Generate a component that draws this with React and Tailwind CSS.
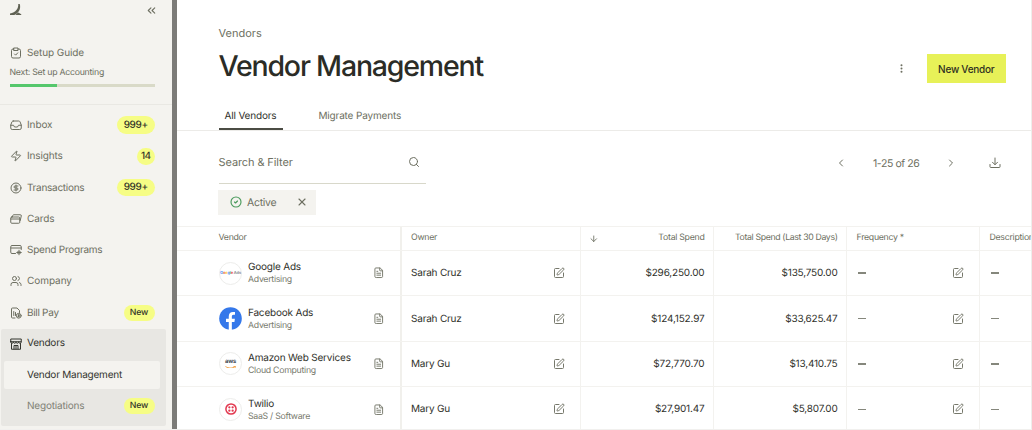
import React from "react";
import {
  ArrowDown, ChevronLeft, ChevronRight, ChevronsLeft, CircleCheck, CircleDollarSign,
  EllipsisVertical, FileText, Search, SquarePen, Users, X, Zap,
} from "lucide-react";

function Svg({ children, className = "size-3" }) {
  return (
    <svg viewBox="0 0 24 24" fill="none" stroke="currentColor" strokeWidth="2" strokeLinecap="round" strokeLinejoin="round" className={"shrink-0 " + className}>
      {children}
    </svg>
  );
}

const Clipboard = () => (
  <Svg>
    <path d="M8 4H6a3 3 0 0 0-3 3v12a3 3 0 0 0 3 3h12a3 3 0 0 0 3-3V7a3 3 0 0 0-3-3h-2" />
    <path d="M8 2h8v5H8z" />
    <path d="m9 14 2.300 2.300 4.200-4.600" />
  </Svg>
);

const InboxIcon = () => (
  <Svg>
    <path d="M1.500 12.500h5.500l2 3.500h6l2-3.500h5.500" />
    <path d="M6.500 4h11a3 3 0 0 1 2.600 1.600l2.400 6.400v6a3 3 0 0 1-3 3h-15a3 3 0 0 1-3-3v-6l2.400-6.400A3 3 0 0 1 6.500 4z" />
  </Svg>
);

const CardsIcon = () => (
  <Svg>
    <path d="M4.500 8 5.500 5a2 2 0 0 1 2-1.500h13A2 2 0 0 1 22.500 6l-2 9" />
    <rect x="1.500" y="8" width="18" height="12.500" rx="2" />
    <path d="M2 12h17" />
  </Svg>
);

const ProgramsIcon = () => (
  <Svg>
    <path d="M11 19H4a2.500 2.500 0 0 1-2.500-2.500v-11A2.500 2.500 0 0 1 4 3h16a2.500 2.500 0 0 1 2.500 2.500V11" />
    <path d="M2 8h20" />
    <path d="M18 12.500v9M13.500 17h9M15.500 14.500l5 5M20.500 14.500l-5 5" />
  </Svg>
);

const BillIcon = () => (
  <Svg>
    <path d="M10 22H5a2 2 0 0 1-2-2V4a2 2 0 0 1 2-2h9l5 5v4" />
    <path d="M7.500 9v8M11 11v6" />
    <circle cx="17.500" cy="17.500" r="4.800" />
    <path d="M19 16h-2.500v1.500h2V19H16M17.500 15v5" />
  </Svg>
);

const StoreIcon = () => (
  <Svg>
    <path d="M1.500 7.500V2h21v5.500c0 4-5.200 4-5.200 0 0 4-5.300 4-5.300 0 0 4-5.300 4-5.300 0 0 4-5.200 4-5.200 0zM1.500 7.500h21" />
    <path d="M3 11v11.500h18V11M8 22v-7h8v7M12 15v7" />
  </Svg>
);

const DownloadIcon = () => (
  <Svg>
    <path d="M12 2v13M7 10.500l5 5 5-5M2 15v4.500A1.500 1.500 0 0 0 3.500 21h17a1.500 1.500 0 0 0 1.500-1.500V15" />
  </Svg>
);

const nav = [
  { icon: InboxIcon, label: "Inbox", badge: "999+" },
  { icon: Zap, label: "Insights", badge: "14", track: "tracking-[-0.15px]" },
  { icon: CircleDollarSign, label: "Transactions", badge: "999+", track: "tracking-[-0.28px]" },
  { icon: CardsIcon, label: "Cards" },
  { icon: ProgramsIcon, label: "Spend Programs", track: "tracking-[-0.24px]" },
  { icon: Users, label: "Company", track: "tracking-[-0.05px]" },
  { icon: BillIcon, label: "Bill Pay", badge: "New", track: "tracking-[-0.3px]" },
];

function Badge({ text }) {
  if (!text) return null;
  const kind =
    text === "New"
      ? "h-4 w-[31px] pt-px text-[8.75px] tracking-[-0.2px]"
      : text === "14"
        ? "size-[17.5px] text-[10px] tracking-[-0.5px]"
        : "h-[17.5px] w-[37.5px] text-[10px] tracking-[-0.35px]";
  return (
    <span className={"ml-auto flex items-center justify-center rounded-full bg-[#f6fd85] font-medium text-[#33342a] " + kind}>{text}</span>
  );
}

function NavRow({ item }) {
  const Icon = item.icon;
  return (
    <div className="flex h-[31.25px] items-center pl-[9.5px] pr-[17.5px]">
      <span className="flex w-[17.5px]"><Icon className="size-3" /></span>
      <span className={"pt-px text-[10px] " + (item.track || "tracking-[-0.1px]")}>{item.label}</span>
      <Badge text={item.badge} />
    </div>
  );
}

function Sidebar() {
  return (
    <aside className="flex w-[172px] shrink-0 flex-col bg-[#f4f3ef] text-[#6d6f61]">
      <div className="flex h-[41px] items-start justify-between pl-[10px] pr-[14px] pt-[4px]">
        <svg viewBox="0 0 24 24" className="size-[12px]" fill="#5f6153">
          <path d="M16.500 0c.8 9-4.800 16.500-16.500 19.200v3h8.500C17 18 22.500 10 19.500 0z" />
          <path d="m13 19.500 3.500-2.500 6 3.300v1.900H11z" />
        </svg>
        <ChevronsLeft className="size-[13px]" strokeWidth={2} />
      </div>
      <div className="flex h-[63.500px] flex-col border-b border-[#e9e8e3] pl-[9.5px] pr-[17.5px]">
        <div className="flex h-[23px] items-center">
          <span className="flex w-[17.5px]"><Clipboard /></span>
          <span className="pt-px text-[10px] tracking-[-0.1px]">Setup Guide</span>
        </div>
        <div className="flex h-[17px] items-center pt-[1.5px] text-[8.75px] tracking-[-0.26px]">Next: Set up Accounting</div>
        <div className="mt-[3px] flex h-[3px] bg-[#d9dac8]">
          <div className="w-[33%] bg-[#55c76c]" />
        </div>
      </div>
      <div className="flex flex-col pt-[5px]">
        {nav.map((item) => <NavRow key={item.label} item={item} />)}
      </div>
      <div className="ml-[1px] mr-[6px] mt-[1px] flex h-[97px] flex-col rounded-[2px] bg-[#e8e7e3]">
        <div className="flex h-7 items-center pl-[8.5px] text-[#33342e]">
          <span className="flex w-[17.5px] pt-px"><StoreIcon /></span>
          <span className="pt-px text-[10px] tracking-[-0.22px]">Vendors</span>
        </div>
        <div className="ml-[3px] mr-[6px] mt-[3.500px] flex h-[28.500px] items-center rounded-[2px] bg-[#f4f3ef] pl-[23px] pt-px text-[10px] tracking-[-0.22px] text-[#33342e]">
          Vendor Management
        </div>
        <div className="flex h-[34px] items-center pl-[26px] pr-[11.5px] text-[10px] tracking-[-0.2px] text-[#7f8175]">
          <span className="pt-px">Negotiations</span>
          <Badge text="New" />
        </div>
      </div>
    </aside>
  );
}

const rows = [
  { name: "Google Ads", kind: "Advertising", logo: "google", owner: "Sarah Cruz", total: "$296,250.00", month: "$135,750.00" },
  { name: "Facebook Ads", kind: "Advertising", logo: "facebook", owner: "Sarah Cruz", total: "$124,152.97", month: "$33,625.47" },
  { name: "Amazon Web Services", kind: "Cloud Computing", logo: "aws", owner: "Mary Gu", total: "$72,770.70", month: "$13,410.75" },
  { name: "Twilio", kind: "SaaS / Software", logo: "twilio", owner: "Mary Gu", total: "$27,901.47", month: "$5,807.00" },
];

function Logo({ kind }) {
  if (kind === "facebook") {
    return (
      <svg viewBox="0 0 24 24" className="size-[23px] shrink-0">
        <circle cx="12" cy="12" r="11.800" fill="#3578ea" />
        <path d="M10.200 24v-8.300H7.300v-3.500h2.900V9.600c0-3 1.700-4.500 4.400-4.500 1.100 0 2.100.2 2.100.2v2.900h-1.400c-1.500 0-1.900.9-1.900 1.900v2.100h3.200l-.5 3.500h-2.700V24z" fill="#fff" />
      </svg>
    );
  }
  return (
    <span className="flex size-[23px] shrink-0 items-center justify-center rounded-full border border-[#ededeb] bg-white">
      {kind === "google" && (
        <span className="flex whitespace-pre text-[4px] font-semibold leading-none tracking-[-0.15px]">
          <span className="text-[#4285f4]">G</span><span className="text-[#ea4335]">o</span><span className="text-[#fbbc05]">o</span>
          <span className="text-[#4285f4]">g</span><span className="text-[#34a853]">l</span><span className="text-[#ea4335]">e</span>
          <span className="text-[#85878b]"> Ads</span>
        </span>
      )}
      {kind === "aws" && (
        <span className="flex flex-col items-center">
          <span className="h-[5px] text-[6px] font-semibold leading-[4px] tracking-[-0.3px] text-[#333d4a]">aws</span>
          <svg viewBox="0 0 22 5" className="mt-px h-[2.500px] w-[11px]" fill="none" stroke="#f0a045" strokeWidth="2">
            <path d="M1 1c6 4 14 4 19 0M17 .8l4-.2-.8 3" />
          </svg>
        </span>
      )}
      {kind === "twilio" && (
        <svg viewBox="0 0 24 24" className="size-[12px]">
          <circle cx="12" cy="12" r="10.200" fill="none" stroke="#e2384f" strokeWidth="3" />
          <g fill="#e2384f">
            <circle cx="8.700" cy="8.700" r="2.300" /><circle cx="15.300" cy="8.700" r="2.300" />
            <circle cx="8.700" cy="15.300" r="2.300" /><circle cx="15.300" cy="15.300" r="2.300" />
          </g>
        </svg>
      )}
    </span>
  );
}

const Dash = () => <span className="h-[1.500px] w-2 bg-[#85877c]" />;
const grid = "grid grid-cols-[225px_179px_133px_133px_133px_52px]";
const line = "border-r border-[#f3f2ef]";
const first = "border-r-2 border-[#f1f0ec]";

function Table() {
  return (
    <div className="flex flex-col">
      <div className={grid + " h-[25px] border-y border-[#f3f2ef] text-[8.75px] tracking-[-0.28px] text-[#6d6f61]"}>
        <div className={"flex items-center pl-[41.500px] pt-px " + first}>Vendor</div>
        <div className={"flex items-center pl-[9px] pt-px " + line}>Owner</div>
        <div className={"flex items-center justify-between pl-2 pr-[8.500px] " + line}>
          <ArrowDown className="size-[9.500px]" strokeWidth={2.2} />
          <span className="pt-px">Total Spend</span>
        </div>
        <div className={"flex items-center justify-end pr-[8.500px] pt-px tracking-[-0.36px] " + line}>Total Spend (Last 30 Days)</div>
        <div className={"flex items-center pl-[9.500px] pt-px " + line}>Frequency *</div>
        <div className="flex items-center overflow-hidden whitespace-nowrap pl-[9.500px] pt-px">Description</div>
      </div>
      {rows.map((r) => (
        <div key={r.name} className={grid + " h-[45.400px] border-b border-[#f3f2ef] text-[10px] tracking-[-0.2px] text-[#30312b]"}>
          <div className={"flex items-center pl-[42px] pr-[15.500px] " + first}>
            <Logo kind={r.logo} />
            <div className="ml-[6px] flex flex-col pt-[1.500px]">
              <span className="text-[10px] leading-[13px]">{r.name}</span>
              <span className="text-[8.75px] leading-[12px] tracking-[-0.28px] text-[#787a6d]">{r.kind}</span>
            </div>
            <FileText className="ml-auto size-[11.500px] text-[#76786b]" />
          </div>
          <div className={"flex items-center justify-between pl-[9px] pr-[15px] " + line}>
            <span className="pt-px">{r.owner}</span>
            <SquarePen className="size-3 text-[#76786b]" />
          </div>
          <div className={"flex items-center justify-end pr-[8.500px] pt-px tracking-[-0.17px] " + line}>{r.total}</div>
          <div className={"flex items-center justify-end pr-[8.500px] pt-px " + line}>{r.month}</div>
          <div className={"flex items-center justify-between pl-[11px] pr-[15px] " + line}>
            <Dash />
            <SquarePen className="size-3 text-[#76786b]" />
          </div>
          <div className="flex items-center pl-[11px]"><Dash /></div>
        </div>
      ))}
    </div>
  );
}

export default function App() {
  return (
    <div className="flex h-[430px] w-[1032px] overflow-hidden border-b border-[#f1f0ee] bg-white font-[Inter,sans-serif] [text-rendering:geometricPrecision]">
      <Sidebar />
      <div className="w-[5px] shrink-0 bg-[#7c7b78]" />
      <main className="flex min-w-0 flex-1 flex-col overflow-hidden border-r border-[#eeeeeb] text-[#6d6f61]">
        <header className="flex h-[131px] shrink-0 flex-col border-b border-[#ecebe8] pl-[41.500px] pr-[25px]">
          <div className="mt-6 flex h-[17px] items-center pt-px text-[11px]">Vendors</div>
          <div className="mt-[4px] flex h-[42px] items-center">
            <h1 className="text-[28.500px] font-[450] leading-none tracking-[-1.2px] text-[#2b2c26]">Vendor Management</h1>
            <EllipsisVertical className="ml-auto mt-[5px] size-[11px]" strokeWidth={2.4} />
            <button className="ml-5 mt-[5px] flex h-[28.500px] w-[79.500px] items-center justify-center bg-[#e7f158] pt-px text-[10px] font-medium tracking-[-0.25px] text-[#2f3022]">New Vendor</button>
          </div>
          <nav className="mt-auto flex h-[29px] text-[10px] tracking-[-0.17px]">
            <span className="flex w-16 justify-center border-b-2 border-[#4b4c44] pt-[8px] text-[#30312b]">All Vendors</span>
            <span className="ml-9 pt-[8px]">Migrate Payments</span>
          </nav>
        </header>
        <div className="flex h-[53px] shrink-0 items-start pl-[41.500px] pr-[30px]">
          <div className="flex h-[52.500px] w-[207px] items-center justify-between border-b border-[#d8d8ca] pb-px pr-[6px] pt-[12px] text-[11px] tracking-[-0.1px]">
            <span>Search &amp; Filter</span>
            <Search className="size-3" />
          </div>
          <div className="ml-auto flex h-[64px] items-center">
            <ChevronLeft className="size-[12px]" />
            <span className="ml-[26px] w-[46px] whitespace-nowrap pt-px text-[10.500px] tracking-[-0.42px]">1-25 of 26</span>
            <ChevronRight className="ml-[26px] size-[12px]" />
            <span className="ml-8 flex"><DownloadIcon /></span>
          </div>
        </div>
        <div className="ml-[41px] mt-[5.500px] flex h-[25px] w-[98px] shrink-0 items-center bg-[#f4f3ef] pl-[11.500px] pr-2">
          <CircleCheck className="size-3 text-[#4a9a5c]" strokeWidth={2.3} />
          <span className="ml-[5.500px] pt-px text-[10.500px] tracking-[-0.3px]">Active</span>
          <X className="ml-auto size-3" strokeWidth={2.2} />
        </div>
        <div className="mt-[11.500px] flex shrink-0 flex-col">
          <Table />
        </div>
      </main>
    </div>
  );
}
